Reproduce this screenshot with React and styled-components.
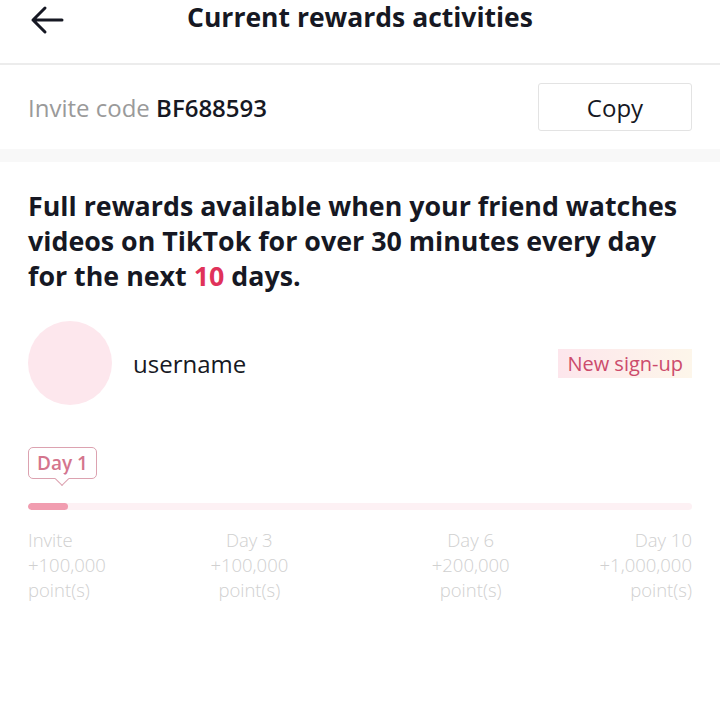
import styled, { createGlobalStyle } from "styled-components";

const Global = createGlobalStyle`
  html, body {
    margin: 0;
    background: #fff;
    font-family: "Open Sans", "Noto Sans", sans-serif;
    color: #161823;
  }
`;

const Page = styled.div`
  width: 720px;
  min-height: 710px;
  background: #fff;
`;

const Header = styled.header`
  height: 63px;
  border-bottom: 2px solid #ececec;
  display: grid;
  grid-template-columns: 80px 1fr 80px;
  align-items: start;
`;

const Back = styled.button`
  border: none;
  background: transparent;
  padding: 0 0 0 30px;
  height: 40px;
  display: flex;
  align-items: center;
  cursor: pointer;
`;

const Title = styled.h1`
  margin: 0;
  text-align: center;
  font-size: 26.5px;
  font-weight: 700;
  line-height: 35px;
`;

const InviteRow = styled.div`
  height: 84px;
  padding: 0 28px;
  display: flex;
  align-items: center;
  justify-content: space-between;
  border-bottom: 13px solid #f8f8f8;
`;

const InviteText = styled.div`
  font-size: 24px;
  color: #9a9a9a;
`;

const Code = styled.span`
  color: #161823;
  font-weight: 600;
`;

const CopyButton = styled.button`
  width: 154px;
  height: 48px;
  border: 1px solid #e3e3e3;
  border-radius: 3px;
  background: #fff;
  font-family: inherit;
  font-size: 24px;
  color: #161823;
  cursor: pointer;
`;

const Content = styled.section`
  padding: 26px 28px 0;
`;

const Lead = styled.p`
  margin: 0;
  font-size: 26.8px;
  font-weight: 700;
  line-height: 35px;
`;

const Accent = styled.span`
  color: #e0325a;
`;

const Friend = styled.div`
  margin-top: 28px;
  display: flex;
  align-items: center;
  gap: 21px;
`;

const Avatar = styled.div`
  width: 84px;
  height: 84px;
  border-radius: 50%;
  background: #fde7ed;
  flex-shrink: 0;
`;

const Name = styled.div`
  flex: 1;
  font-size: 24px;
`;

const Badge = styled.span`
  padding: 1px 9px;
  font-size: 20px;
  color: #cc4b6c;
  background: linear-gradient(90deg, #fde6ec, #fdf6ea);
`;

const Tip = styled.div`
  position: relative;
  display: inline-block;
  margin-top: 42px;
  padding: 2px 8px;
  border: 1px solid #dca2b0;
  border-radius: 5px;
  font-size: 19px;
  font-weight: 600;
  color: #d4758d;
  &::after {
    content: "";
    position: absolute;
    left: 28px;
    bottom: -6px;
    width: 9px;
    height: 9px;
    background: #fff;
    border-right: 1px solid #dca2b0;
    border-bottom: 1px solid #dca2b0;
    transform: rotate(45deg);
  }
`;

const Track = styled.div`
  margin-top: 24px;
  height: 7px;
  border-radius: 4px;
  background: #fdf1f4;
  overflow: hidden;
`;

const Fill = styled.div`
  height: 100%;
  border-radius: 4px;
  background: #f19db0;
`;

const Steps = styled.div`
  margin-top: 17px;
  display: grid;
  grid-template-columns: repeat(6, 1fr);
`;

const Step = styled.div`
  grid-column: ${({ $col }) => $col};
  font-size: 18.5px;
  font-weight: 300;
  line-height: 25px;
  color: #d0d0d0;
  white-space: nowrap;
  text-align: ${({ $align }) => $align};
`;

const steps = [
  { label: "Invite", points: "+100,000", align: "left", col: "1 / 2" },
  { label: "Day 3", points: "+100,000", align: "center", col: "2 / 4" },
  { label: "Day 6", points: "+200,000", align: "center", col: "4 / 6" },
  { label: "Day 10", points: "+1,000,000", align: "right", col: "6 / 7" },
];

export default function App() {
  return (
    <Page>
      <Global />
      <Header>
        <Back aria-label="Back">
          <svg width="34" height="30" viewBox="0 0 34 30" fill="none">
            <path
              d="M32 15H3M15 3L3 15l12 12"
              stroke="#161823"
              strokeWidth="3"
              strokeLinecap="round"
              strokeLinejoin="round"
            />
          </svg>
        </Back>
        <Title>Current rewards activities</Title>
        <div />
      </Header>
      <InviteRow>
        <InviteText>
          Invite code <Code>BF688593</Code>
        </InviteText>
        <CopyButton>Copy</CopyButton>
      </InviteRow>
      <Content>
        <Lead>
          Full rewards available when your friend watches videos on TikTok
          for over 30 minutes every day for the next <Accent>10</Accent> days.
        </Lead>
        <Friend>
          <Avatar />
          <Name>username</Name>
          <Badge>New sign-up</Badge>
        </Friend>
        <Tip>Day 1</Tip>
        <Track>
          <Fill style={{ width: `${(40 / 664) * 100}%` }} />
        </Track>
        <Steps>
          {steps.map((s) => (
            <Step key={s.label} $align={s.align} $col={s.col}>
              {s.label}
              <br />
              {s.points}
              <br />
              point(s)
            </Step>
          ))}
        </Steps>
      </Content>
    </Page>
  );
}
